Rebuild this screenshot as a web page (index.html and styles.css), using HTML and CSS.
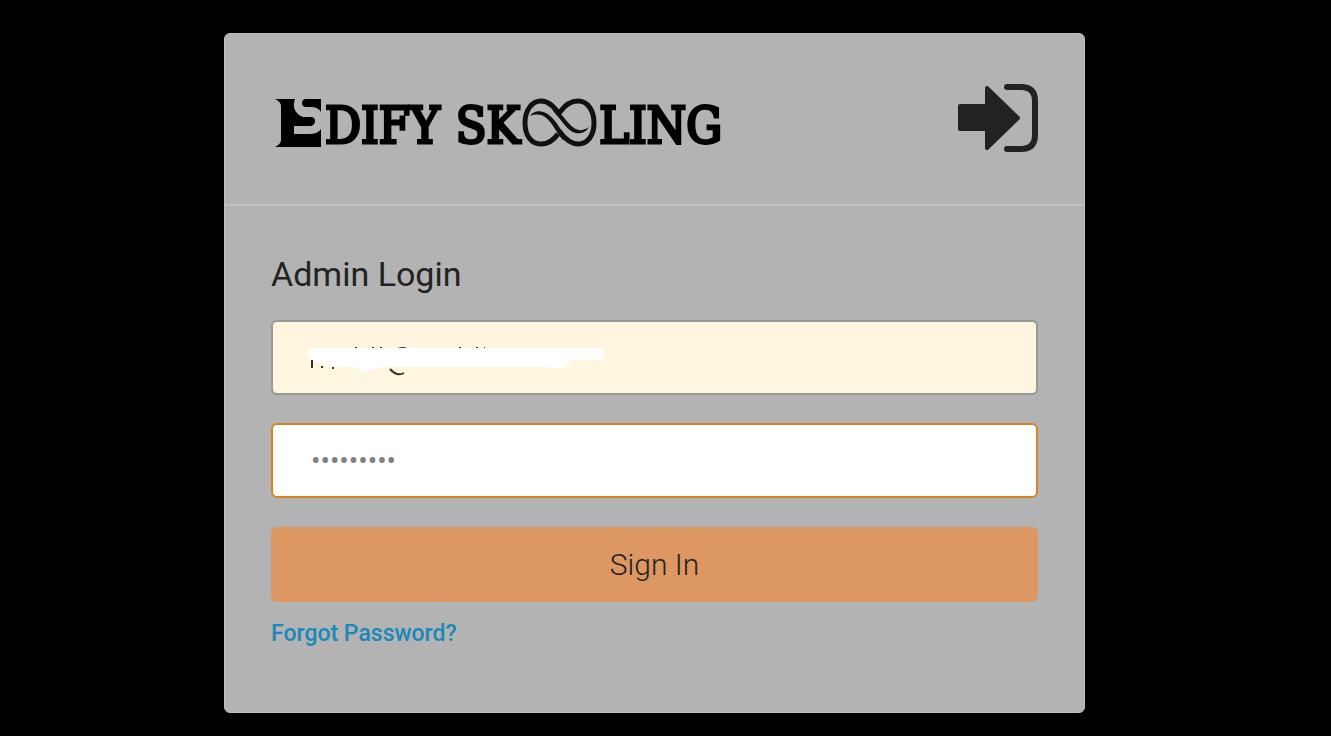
FILE: index.html
```html
<!DOCTYPE html>
<html lang="en">
<head>
<meta charset="utf-8">
<meta name="viewport" content="width=device-width, initial-scale=1">
<title>Edify Skooling</title>
<link rel="stylesheet" href="styles.css">
</head>
<body>
<main class="card">
  <header class="card-header">
    <div class="brand">
      <svg class="brand-mark" viewBox="0 0 48 50" aria-hidden="true">
        <path d="M0 1H20C17 9 20 16 28 19H36Q40 19 40 23T36 28H19V36H34Q43 36 46 31V49H0Q6 46 6 42V8Q6 4 0 1Z"/>
        <path d="M46 1V14Q43 9 36 9H31Q27 9 27 5T31 1Z"/>
      </svg>
      <span class="brand-text">DIFY</span>
      <span class="brand-text brand-second">SK</span>
      <svg class="brand-loop" viewBox="0 0 75 50" aria-hidden="true">
        <path class="loop-ring" d="M36 36C31 43 26 46 19 46C9 46 3 37 3 25C3 12 10 3 19 3C27 3 32 9 38 17"/>
        <path class="loop-ring" d="M38 14C43 7 48 3 56 3C66 3 72 13 72 25C72 37 66 46 56 46C49 46 43 41 37 33"/>
        <path d="M8 18C12 12 20 12 27 17C35 23 39 33 45 40L41 42C34 34 30 24 23 19C18 16 14 16 8 18Z"/>
        <path d="M33 9C40 16 45 25 52 30C57 33 61 33 67 29C63 36 55 37 49 33C43 29 38 20 31 13Z"/>
      </svg>
      <span class="brand-text">LING</span>
    </div>
    <svg class="login-icon" viewBox="0 0 80 68" aria-hidden="true">
      <path class="arrow" d="M2 22H29V4L60 34L29 64V45H2Z"/>
      <path class="bracket" d="M49 3H63Q77 3 77 17V51Q77 65 63 65H49"/>
    </svg>
  </header>
  <form class="login-form">
    <h1 class="title">Admin Login</h1>
    <div class="email-field">
      <input class="field field-email" type="text" aria-label="Email">
      <svg class="redaction" viewBox="0 0 300 36" aria-hidden="true">
        <path class="trace" d="M6 17V25M50 4V6M67 4V6M74 5H76M154 4V6M171 4V6M178 5H179M92 6Q97 4 101 6M15 24H17M26 25H28M84 26Q91 34 98 30"/>
        <path class="cover" d="M8 5H292Q299 5 299 11T292 17H264Q262 26 252 26L240 24H82Q70 24 65 27Q55 31 50 24H36Q24 25 18 21Q1 17 2 10Q2 6 8 5Z"/>
      </svg>
    </div>
    <input class="field field-password" type="password" placeholder="•••••••••" aria-label="Password">
    <button class="sign-in" type="button">Sign In</button>
    <a class="forgot" href="#">Forgot Password?</a>
  </form>
</main>
</body>
</html>
```
FILE: styles.css
```css
* { box-sizing: border-box; }
body {
  margin: 0;
  padding: 33px 22px 24px 0;
  background: #000;
  color: #222;
  font-family: Roboto, sans-serif;
}
.card {
  max-width: 861px;
  margin: 0 auto;
  background: #b3b3b3;
  border: 1px solid #c0c0c0;
  border-radius: 6px;
}
.card-header {
  display: flex;
  justify-content: space-between;
  align-items: flex-start;
  padding: 50px 46px 52px 50px;
  border-bottom: 2px solid #c0c0c0;
}
.brand {
  display: flex;
  align-items: flex-end;
  gap: 2px;
  padding-top: 14px;
  color: #000;
}
.brand-mark { width: 48px; height: 50px; }
.brand-loop { width: 75px; height: 50px; fill: #111; }
.loop-ring { fill: none; stroke: #111; stroke-width: 5; }
.brand-text {
  font-family: "DejaVu Serif Condensed", "DejaVu Serif", serif;
  font-size: 50px;
  line-height: 44px;
  -webkit-text-stroke: 3px #000;
}
.brand-second { margin-left: 14px; }
.login-icon { width: 80px; height: 68px; }
.arrow { fill: #222; stroke: #222; stroke-width: 4; stroke-linejoin: round; }
.bracket { fill: none; stroke: #222; stroke-width: 6; stroke-linecap: round; }
.login-form {
  display: flex;
  flex-direction: column;
  padding: 46px 46px 62px;
}
.title {
  margin: 0 0 24px;
  font-size: 34px;
  line-height: 44px;
  font-weight: 400;
}
.email-field { position: relative; margin-bottom: 28px; }
.field {
  display: block;
  width: 100%;
  height: 75px;
  padding: 0 38px;
  border: 2px solid #999;
  border-radius: 6px;
  outline: none;
  background: #fff;
  color: #222;
  font: 28px Roboto, sans-serif;
}
.field-email { background: #fff6e0; }
.field-password { margin-bottom: 29px; border-color: #d88220; }
.field-password::placeholder { color: #808080; opacity: 1; }
.redaction {
  position: absolute;
  left: 35px;
  top: 23px;
  width: 300px;
  height: 36px;
}
.trace { fill: none; stroke: #333; stroke-width: 2; }
.cover { fill: #fff; }
.sign-in {
  height: 75px;
  border: 0;
  border-radius: 6px;
  background: #dc9762;
  color: #222;
  font: 300 30px Roboto, sans-serif;
}
.forgot {
  align-self: flex-start;
  margin-top: 16px;
  color: #1c88b8;
  font-size: 23px;
  line-height: 32px;
  font-weight: 500;
  text-decoration: none;
}
```
